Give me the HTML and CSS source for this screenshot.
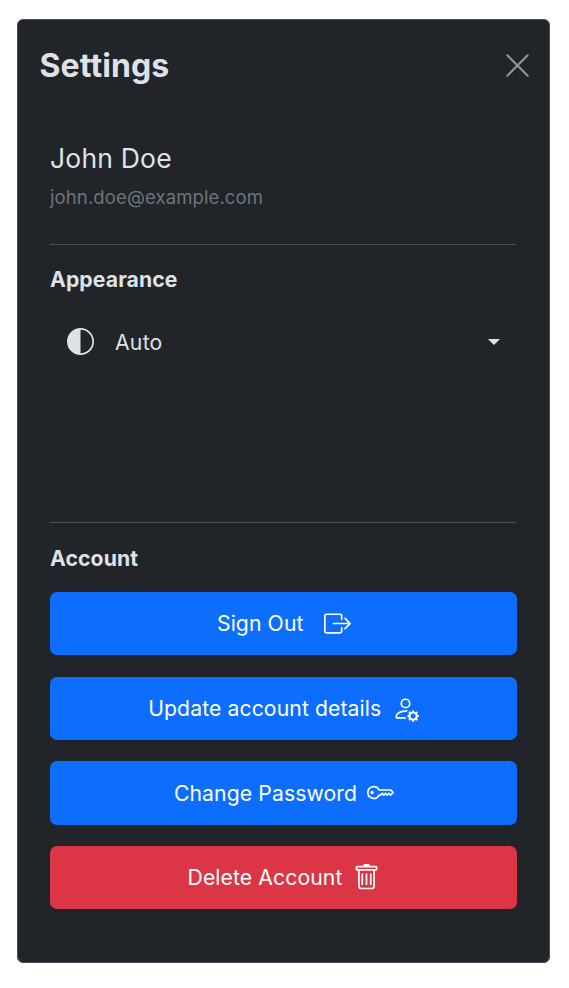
FILE: index.html
```html
<!DOCTYPE html>
<html lang="en">
<head>
<meta charset="utf-8">
<title>Settings</title>
<link rel="stylesheet" href="styles.css">
</head>
<body>
<main class="panel">
  <header class="header">
    <h1 class="title">Settings</h1>
    <button class="close" aria-label="Close"><svg viewBox="0 0 22 22"><path d="M1.3 1.3 20.7 20.7M20.7 1.3 1.3 20.7"/></svg></button>
  </header>
  <section class="profile">
    <h2 class="name">John Doe</h2>
    <p class="email">john.doe@example.com</p>
  </section>
  <section class="appearance">
    <h3 class="label">Appearance</h3>
    <button class="select">
      <svg class="icon" viewBox="0 0 16 16"><path d="M8 15A7 7 0 1 0 8 1zm0 1A8 8 0 1 1 8 0a8 8 0 0 1 0 16"/></svg>
      <span class="value">Auto</span>
      <span class="caret"></span>
    </button>
  </section>
  <section class="account">
    <h3 class="label">Account</h3>
    <div class="actions">
      <button class="btn signout"><span>Sign Out</span>
        <svg class="icon" viewBox="0 0 16 16"><path fill-rule="evenodd" d="M10 12.5a.5.5 0 0 1-.5.5h-8a.5.5 0 0 1-.5-.5v-9a.5.5 0 0 1 .5-.5h8a.5.5 0 0 1 .5.5v2a.5.5 0 0 0 1 0v-2A1.5 1.5 0 0 0 9.500 2h-8A1.5 1.5 0 0 0 0 3.500v9A1.5 1.5 0 0 0 1.500 14h8a1.500 1.500 0 0 0 1.500-1.500v-2a.5.5 0 0 0-1 0z"/><path fill-rule="evenodd" d="M15.854 8.354a.5.5 0 0 0 0-.708l-3-3a.5.5 0 0 0-.708.708L14.293 7.500H5.500a.5.5 0 0 0 0 1h8.793l-2.147 2.146a.5.5 0 0 0 .708.708z"/></svg></button>
      <button class="btn update"><span>Update account details</span>
        <svg class="icon" viewBox="0 0 16 16"><path d="M11 5a3 3 0 1 1-6 0 3 3 0 0 1 6 0M8 7a2 2 0 1 0 0-4 2 2 0 0 0 0 4m.256 7a4.500 4.500 0 0 1-.229-1.004H3c.001-.246.154-.986.832-1.664C4.484 10.680 5.711 10 8 10q.39 0 .74.025c.226-.341.496-.65.804-.918Q8.844 9.002 8 9c-5 0-6 3-6 4s1 1 1 1zm3.630-4.540c.18-.613 1.048-.613 1.229 0l.043.148a.64.64 0 0 0 .921.382l.136-.074c.561-.306 1.175.308.87.869l-.075.136a.64.64 0 0 0 .382.92l.149.045c.612.18.612 1.048 0 1.229l-.15.043a.64.64 0 0 0-.38.921l.074.136c.305.561-.309 1.175-.87.87l-.136-.075a.64.64 0 0 0-.92.382l-.045.149c-.18.612-1.048.612-1.229 0l-.043-.15a.64.64 0 0 0-.921-.38l-.136.074c-.561.305-1.175-.309-.87-.87l.075-.136a.64.64 0 0 0-.382-.92l-.148-.045c-.613-.18-.613-1.048 0-1.229l.148-.043a.64.64 0 0 0 .382-.921l-.074-.136c-.306-.561.308-1.175.869-.87l.136.075a.64.64 0 0 0 .92-.382zM14 12.500a1.500 1.500 0 1 0-3 0 1.500 1.500 0 0 0 3 0"/></svg></button>
      <button class="btn password"><span>Change Password</span>
        <svg class="icon" viewBox="0 0 16 16"><path d="M0 8a4 4 0 0 1 7.465-2H14a.5.5 0 0 1 .354.146l1.500 1.500a.5.5 0 0 1 0 .708l-1.500 1.500a.5.5 0 0 1-.708 0L13 9.207l-.646.647a.5.5 0 0 1-.708 0L11 9.207l-.646.647a.5.5 0 0 1-.708 0L9 9.207l-.646.647A.5.5 0 0 1 8 10h-.535A4 4 0 0 1 0 8m4-3a3 3 0 1 0 2.712 4.285A.5.5 0 0 1 7.163 9h.63l.853-.854a.5.5 0 0 1 .708 0l.646.647.646-.647a.5.5 0 0 1 .708 0l.646.647.646-.647a.5.5 0 0 1 .708 0l.646.647.793-.793-1-1h-6.630a.5.5 0 0 1-.451-.285A3 3 0 0 0 4 5"/><path d="M4 8a1 1 0 1 1-2 0 1 1 0 0 1 2 0"/></svg></button>
      <button class="btn delete"><span>Delete Account</span>
        <svg class="icon" viewBox="0 0 16 16"><path d="M5.500 5.500A.5.5 0 0 1 6 6v6a.5.5 0 0 1-1 0V6a.5.5 0 0 1 .5-.5m2.500 0a.5.5 0 0 1 .5.5v6a.5.5 0 0 1-1 0V6a.5.5 0 0 1 .5-.5m3 .5a.5.5 0 0 0-1 0v6a.5.5 0 0 0 1 0z"/><path d="M14.500 3a1 1 0 0 1-1 1H13v9a2 2 0 0 1-2 2H5a2 2 0 0 1-2-2V4h-.5a1 1 0 0 1-1-1V2a1 1 0 0 1 1-1H6a1 1 0 0 1 1-1h2a1 1 0 0 1 1 1h3.500a1 1 0 0 1 1 1zM4.118 4 4 4.059V13a1 1 0 0 0 1 1h6a1 1 0 0 0 1-1V4.059L11.882 4zM2.500 3h11V2h-11z"/></svg></button>
    </div>
  </section>
</main>
</body>
</html>
```
FILE: styles.css
```css
* { box-sizing: border-box; margin: 0; }
body { padding: 19px 19px 25px 17px; background: #fff; font-family: Inter, sans-serif; color: #dee2e6; }
button { border: 0; padding: 0; background: none; font: inherit; color: inherit; letter-spacing: .09px; }
svg { display: block; flex: none; }
.panel { height: 944px; background: #212529; border: 1px solid #495057; border-radius: 6px; }
.header { height: 90px; padding: 0 20px 0 21.5px; display: flex; align-items: center; justify-content: space-between; }
.title { padding-top: 1px; font-size: 32px; line-height: 40px; font-weight: 700; letter-spacing: .1px; }
.close svg { width: 23px; height: 23px; fill: none; stroke: #909294; stroke-width: 2; stroke-linecap: round; }
.profile, .appearance, .account { margin: 0 32px; }
.profile { height: 135px; padding-top: 32px; border-bottom: 1px solid #495057; }
.name { font-size: 26.5px; line-height: 32px; font-weight: 400; letter-spacing: .2px; }
.email { margin-top: 9px; font-size: 18.5px; line-height: 28px; color: #6c757d; letter-spacing: .12px; }
.appearance { height: 278px; padding-top: 18px; border-bottom: 1px solid #495057; }
.label { font-size: 21.2px; line-height: 32px; font-weight: 700; letter-spacing: .1px; }
.select { width: 100%; height: 62px; margin-top: 15px; padding: 0 17px; display: flex; align-items: center; font-size: 21.2px; letter-spacing: .25px; }
.select .value { padding-top: 1px; }
.icon { width: 27px; height: 27px; fill: currentColor; }
.value { margin-left: 21px; }
.caret { margin-left: auto; margin-top: 1px; border: 6px solid transparent; border-top-color: currentColor; border-bottom: 0; }
.account { padding-top: 19px; }
.actions { margin-top: 18px; display: grid; gap: 21.2px; }
.btn { height: 63.4px; border-radius: 7px; display: flex; align-items: center; justify-content: center; background: #0d6efd; color: #fff; font-size: 21.2px; }
.signout { gap: 20.5px; padding-left: 1px; }
.signout span, .delete span { padding-bottom: 1px; }
.update { gap: 10.5px; }
.password { gap: 10px; padding-left: 1px; }
.delete { gap: 11px; padding-left: 1px; }
.delete { background: #dc3545; }
```
